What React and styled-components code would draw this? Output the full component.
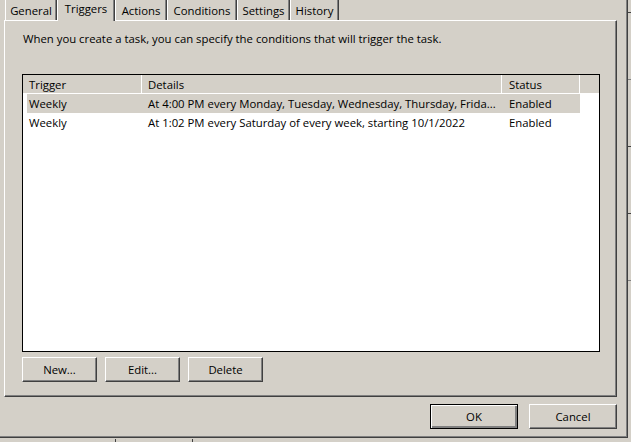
import styled, { createGlobalStyle } from 'styled-components';

const GlobalStyle = createGlobalStyle`
    html, body {
        margin: 0;
        padding: 0;
        background: #d4d0c8;
        overflow: hidden;
    }
    body {
        font-family: 'Open Sans', 'Noto Sans', sans-serif;
        font-size: 11.35px;
        color: #000;
    }
`;

const Screen = styled.div`
    width: 631px;
    height: 442px;
    display: flex;
    flex-direction: column;
    overflow: hidden;
`;

const Top = styled.div`
    display: flex;
    height: 439px;
`;

const Window = styled.div`
    width: 628px;
    height: 438px;
    border-right: 1px solid #404040;
    border-bottom: 1px solid #404040;
    box-shadow: inset -1px -1px 0 #808080;
    display: flex;
    flex-direction: column;
    padding-left: 4px;
    box-sizing: border-box;
`;

const RightStrip = styled.div`
    flex: 1;
    display: flex;
    flex-direction: column;
    padding-top: 12px;
    gap: 66px;
`;

const StripTick = styled.div`
    height: 1px;
    background: ${(p) => p.$color || '#404040'};
`;

const BottomStrip = styled.div`
    flex: 1;
    display: flex;
    padding-left: 115px;
`;

const BottomSlot = styled.div`
    width: 76px;
    border-left: 1px solid #404040;
    border-right: 1px solid #404040;
    background: #d4d0c8;
`;

const TabStrip = styled.div`
    height: 20px;
    display: flex;
    align-items: flex-end;
    padding-left: 1px;
    position: relative;
    z-index: 1;
`;

const Tab = styled.div`
    height: ${(p) => (p.$active ? '22px' : '20px')};
    margin-bottom: ${(p) => (p.$active ? '-1px' : '0')};
    box-sizing: border-box;
    border-left: 1px solid #fff;
    border-right: 1px solid #404040;
    box-shadow: inset -1px 0 0 #808080;
    background: #d4d0c8;
    width: ${(p) => p.$w}px;
    display: flex;
    align-items: ${(p) => (p.$active ? 'flex-start' : 'center')};
    justify-content: center;
    padding-top: ${(p) => (p.$active ? '2px' : '1px')};
    white-space: nowrap;
    line-height: 15px;
`;

const Panel = styled.div`
    width: 613px;
    height: 377px;
    box-sizing: border-box;
    border-top: 1px solid #fff;
    border-left: 1px solid #fff;
    border-right: 1px solid #404040;
    border-bottom: 1px solid #404040;
    box-shadow: inset -1px -1px 0 #808080;
    padding: 10px 16px 0 17px;
    display: flex;
    flex-direction: column;
`;

const Intro = styled.div`
    line-height: 15px;
    height: 15px;
    padding-left: 1px;
    white-space: nowrap;
`;

const List = styled.div`
    margin-top: 28px;
    width: 578px;
    height: 278px;
    box-sizing: border-box;
    border: 1px solid #000;
    background: #fff;
    display: flex;
    flex-direction: column;
`;

const HeaderRow = styled.div`
    display: flex;
    height: 19px;
    background: #d4d0c8;
    border-bottom: 1px solid #fff;
    box-sizing: border-box;
`;

const HeaderCell = styled.div`
    width: ${(p) => p.$w}px;
    box-sizing: border-box;
    border-right: ${(p) => (p.$last ? 'none' : '1px solid #fff')};
    padding-left: ${(p) => p.$pad}px;
    padding-top: 1px;
    line-height: 17px;
    white-space: nowrap;
    overflow: hidden;
`;

const Row = styled.div`
    display: flex;
    height: 19px;
    width: 553px;
    margin-left: 4px;
    background: ${(p) => (p.$selected ? '#d4d0c8' : 'transparent')};
    line-height: 19px;
`;

const Cell = styled.div`
    width: ${(p) => p.$w}px;
    box-sizing: border-box;
    padding-left: ${(p) => p.$pad}px;
    white-space: nowrap;
    overflow: hidden;
`;

const ButtonRow = styled.div`
    display: flex;
    gap: 8px;
    margin-top: 5px;
`;

const Button = styled.div`
    width: 75px;
    height: 25px;
    box-sizing: border-box;
    background: #d4d0c8;
    border-top: 1px solid #fff;
    border-left: 1px solid #fff;
    border-right: 1px solid #404040;
    border-bottom: 1px solid #404040;
    box-shadow: inset -1px -1px 0 #808080;
    display: flex;
    align-items: center;
    justify-content: center;
    line-height: 15px;
    padding-bottom: 1px;
`;

const DefaultButton = styled(Button)`
    width: 88px;
    border: 1px solid #000;
    box-shadow: inset 1px 1px 0 #fff, inset -2px -2px 0 #808080;
`;

const WideButton = styled(Button)`
    width: 88px;
`;

const Footer = styled.div`
    display: flex;
    justify-content: flex-end;
    gap: 11px;
    padding: 7px 10px 0 0;
`;

const columns = [
    { key: 'trigger', label: 'Trigger', w: 119, pad: 6 },
    { key: 'details', label: 'Details', w: 360, pad: 6 },
    { key: 'status', label: 'Status', w: 78, pad: 7 },
];

const triggers = [
    {
        trigger: 'Weekly',
        details: 'At 4:00 PM every Monday, Tuesday, Wednesday, Thursday, Frida...',
        status: 'Enabled',
        selected: true,
    },
    {
        trigger: 'Weekly',
        details: 'At 1:02 PM every Saturday of every week, starting 10/1/2022',
        status: 'Enabled',
    },
];

const tabs = [
    { label: 'General', w: 52 },
    { label: 'Triggers', w: 58, active: true },
    { label: 'Actions', w: 52 },
    { label: 'Conditions', w: 70 },
    { label: 'Settings', w: 53 },
    { label: 'History', w: 49 },
];

const App = () => {
    return (
        <Screen>
            <GlobalStyle />
            <Top>
                <Window>
                    <TabStrip>
                        {tabs.map((t) => (
                            <Tab key={t.label} $w={t.w} $active={t.active}>
                                {t.label}
                            </Tab>
                        ))}
                    </TabStrip>
                    <Panel>
                        <Intro>
                            When you create a task, you can specify the conditions that will trigger the task.
                        </Intro>
                        <List>
                            <HeaderRow>
                                {columns.map((c) => (
                                    <HeaderCell key={c.key} $w={c.w} $pad={c.pad}>
                                        {c.label}
                                    </HeaderCell>
                                ))}
                                <HeaderCell $w={19} $pad={0} $last />
                            </HeaderRow>
                            {triggers.map((r, i) => (
                                <Row key={i} $selected={r.selected}>
                                    <Cell $w={115} $pad={2}>{r.trigger}</Cell>
                                    <Cell $w={360} $pad={6}>{r.details}</Cell>
                                    <Cell $w={78} $pad={7}>{r.status}</Cell>
                                </Row>
                            ))}
                        </List>
                        <ButtonRow>
                            <Button>New...</Button>
                            <Button>Edit...</Button>
                            <Button>Delete</Button>
                        </ButtonRow>
                    </Panel>
                    <Footer>
                        <DefaultButton>OK</DefaultButton>
                        <WideButton>Cancel</WideButton>
                    </Footer>
                </Window>
                <RightStrip>
                    <StripTick />
                    <StripTick $color="#808080" />
                    <StripTick />
                    <StripTick />
                    <StripTick $color="#808080" />
                </RightStrip>
            </Top>
            <BottomStrip>
                <BottomSlot />
            </BottomStrip>
        </Screen>
    );
};

export default App;
